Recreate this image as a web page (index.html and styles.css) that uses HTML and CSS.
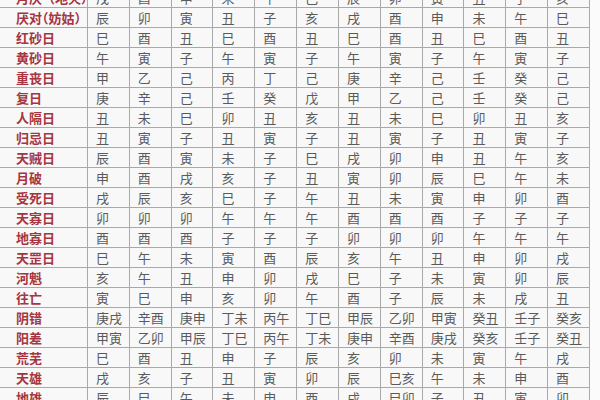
FILE: index.html
```html
<!DOCTYPE html>
<html lang="zh-CN">
<head>
<meta charset="utf-8">
<title>神煞表</title>
<link rel="stylesheet" href="styles.css">
</head>
<body>
<div class="view">
<table class="grid">
<colgroup><col class="c-label"><col span="12"></colgroup>
<tbody>
<tr><th>月厌（地火）</th><td>戌</td><td>酉</td><td>申</td><td>未</td><td>午</td><td>巳</td><td>辰</td><td>卯</td><td>寅</td><td>丑</td><td>子</td><td>亥</td></tr>
<tr><th class="narrow">厌对（妨姑）</th><td>辰</td><td>卯</td><td>寅</td><td>丑</td><td>子</td><td>亥</td><td>戌</td><td>酉</td><td>申</td><td>未</td><td>午</td><td>巳</td></tr>
<tr><th>红砂日</th><td>巳</td><td>酉</td><td>丑</td><td>巳</td><td>酉</td><td>丑</td><td>巳</td><td>酉</td><td>丑</td><td>巳</td><td>酉</td><td>丑</td></tr>
<tr><th>黄砂日</th><td>午</td><td>寅</td><td>子</td><td>午</td><td>寅</td><td>子</td><td>午</td><td>寅</td><td>子</td><td>午</td><td>寅</td><td>子</td></tr>
<tr><th>重丧日</th><td>甲</td><td>乙</td><td>己</td><td>丙</td><td>丁</td><td>己</td><td>庚</td><td>辛</td><td>己</td><td>壬</td><td>癸</td><td>己</td></tr>
<tr><th>复日</th><td>庚</td><td>辛</td><td>己</td><td>壬</td><td>癸</td><td>戊</td><td>甲</td><td>乙</td><td>己</td><td>壬</td><td>癸</td><td>己</td></tr>
<tr><th>人隔日</th><td>丑</td><td>未</td><td>巳</td><td>卯</td><td>丑</td><td>亥</td><td>丑</td><td>未</td><td>巳</td><td>卯</td><td>丑</td><td>亥</td></tr>
<tr><th>归忌日</th><td>丑</td><td>寅</td><td>子</td><td>丑</td><td>寅</td><td>子</td><td>丑</td><td>寅</td><td>子</td><td>丑</td><td>寅</td><td>子</td></tr>
<tr><th>天贼日</th><td>辰</td><td>酉</td><td>寅</td><td>未</td><td>子</td><td>巳</td><td>戌</td><td>卯</td><td>申</td><td>丑</td><td>午</td><td>亥</td></tr>
<tr><th>月破</th><td>申</td><td>酉</td><td>戌</td><td>亥</td><td>子</td><td>丑</td><td>寅</td><td>卯</td><td>辰</td><td>巳</td><td>午</td><td>未</td></tr>
<tr><th>受死日</th><td>戌</td><td>辰</td><td>亥</td><td>巳</td><td>子</td><td>午</td><td>丑</td><td>未</td><td>寅</td><td>申</td><td>卯</td><td>酉</td></tr>
<tr><th>天寡日</th><td>卯</td><td>卯</td><td>卯</td><td>午</td><td>午</td><td>午</td><td>酉</td><td>酉</td><td>酉</td><td>子</td><td>子</td><td>子</td></tr>
<tr><th>地寡日</th><td>酉</td><td>酉</td><td>酉</td><td>子</td><td>子</td><td>子</td><td>卯</td><td>卯</td><td>卯</td><td>午</td><td>午</td><td>午</td></tr>
<tr><th>天罡日</th><td>巳</td><td>午</td><td>未</td><td>寅</td><td>酉</td><td>辰</td><td>亥</td><td>午</td><td>丑</td><td>申</td><td>卯</td><td>戌</td></tr>
<tr><th>河魁</th><td>亥</td><td>午</td><td>丑</td><td>申</td><td>卯</td><td>戌</td><td>巳</td><td>子</td><td>未</td><td>寅</td><td>卯</td><td>辰</td></tr>
<tr><th>往亡</th><td>寅</td><td>巳</td><td>申</td><td>亥</td><td>卯</td><td>午</td><td>酉</td><td>子</td><td>辰</td><td>未</td><td>戌</td><td>丑</td></tr>
<tr><th>阴错</th><td>庚戌</td><td>辛酉</td><td>庚申</td><td>丁未</td><td>丙午</td><td>丁巳</td><td>甲辰</td><td>乙卯</td><td>甲寅</td><td>癸丑</td><td>壬子</td><td>癸亥</td></tr>
<tr><th>阳差</th><td>甲寅</td><td>乙卯</td><td>甲辰</td><td>丁巳</td><td>丙午</td><td>丁未</td><td>庚申</td><td>辛酉</td><td>庚戌</td><td>癸亥</td><td>壬子</td><td>癸丑</td></tr>
<tr><th>荒芜</th><td>巳</td><td>酉</td><td>丑</td><td>申</td><td>子</td><td>辰</td><td>亥</td><td>卯</td><td>未</td><td>寅</td><td>午</td><td>戌</td></tr>
<tr><th>天雄</th><td>戌</td><td>亥</td><td>子</td><td>丑</td><td>寅</td><td>卯</td><td>辰</td><td>巳亥</td><td>午</td><td>未</td><td>申</td><td>酉</td></tr>
<tr><th>地雄</th><td>辰</td><td>巳</td><td>午</td><td>未</td><td>申</td><td>酉</td><td>戌</td><td>巳卯</td><td>子</td><td>丑</td><td>寅</td><td>卯</td></tr>
</tbody>
</table>
</div>
</body>
</html>
```
FILE: styles.css
```css
html, body {
  margin: 0;
  padding: 0;
  background: #fbfbfb;
}
.view {
  width: 600px;
  height: 400px;
  overflow: hidden;
}
.grid {
  border-collapse: collapse;
  table-layout: fixed;
  width: 591px;
  margin-top: -13px;
  margin-left: -1px;
  background: #f8f8f8;
  font-family: "Noto Sans CJK SC", "Noto Sans", sans-serif;
}
.c-label {
  width: 88px;
}
.grid th,
.grid td {
  height: 19px;
  padding: 0 0 0 8px;
  border: 1px solid #a9a9a9;
  text-align: left;
  vertical-align: middle;
  white-space: nowrap;
  overflow: hidden;
  line-height: 19px;
}
.grid th {
  padding-left: 16px;
  font-size: 13px;
  font-weight: 700;
  color: #a53540;
}
.grid th.narrow {
  font-feature-settings: "halt";
}
.grid td {
  font-size: 13px;
  font-weight: 400;
  color: #5a5a5a;
}
```
